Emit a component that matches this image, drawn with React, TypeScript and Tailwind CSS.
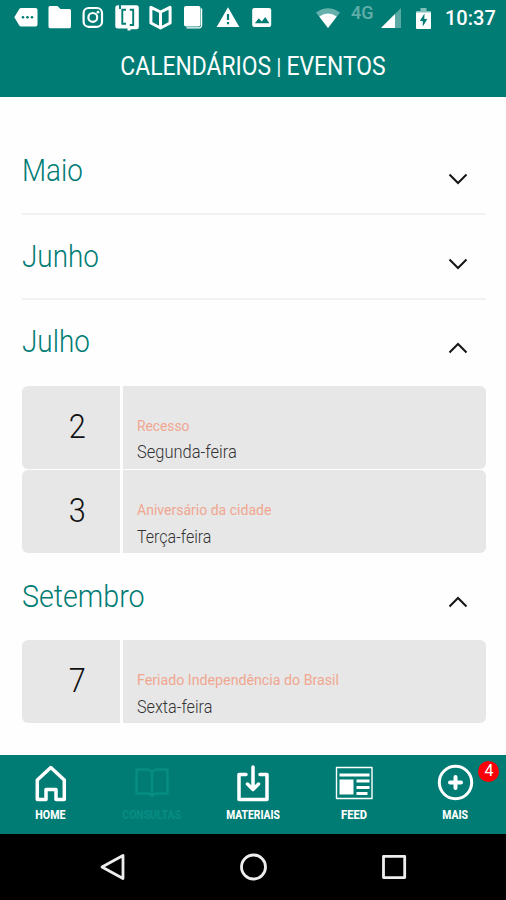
import { useState } from 'react';
import type { ReactNode } from 'react';
import clsx from 'clsx';

type EventItem = { day: number; title: string; weekday: string; titleScale: string; weekdayScale: string };
type Month = { name: string; scale: string; events: EventItem[]; open: boolean };

const MONTHS: Month[] = [
  { name: 'Maio', scale: 'scale-x-[0.87]', open: false, events: [] },
  { name: 'Junho', scale: 'scale-x-[0.87]', open: false, events: [] },
  {
    name: 'Julho',
    scale: 'scale-x-[0.87]',
    open: true,
    events: [
      { day: 2, title: 'Recesso', weekday: 'Segunda-feira', titleScale: 'scale-x-[0.92]', weekdayScale: 'scale-x-[0.915]' },
      { day: 3, title: 'Aniversário da cidade', weekday: 'Terça-feira', titleScale: 'scale-x-[0.935]', weekdayScale: 'scale-x-[0.89]' },
    ],
  },
  {
    name: 'Setembro',
    scale: 'scale-x-[0.896]',
    open: true,
    events: [
      { day: 7, title: 'Feriado Independência do Brasil', weekday: 'Sexta-feira', titleScale: 'scale-x-[0.947]', weekdayScale: 'scale-x-[0.9]' },
    ],
  },
];

function StatusIcon({ children }: { children: ReactNode }) {
  return (
    <svg viewBox="0 0 24 26" className="h-[26px] w-6 shrink-0" fill="#fff">
      {children}
    </svg>
  );
}

function StatusBar() {
  return (
    <div className="flex h-9 items-center pl-[14px] pr-[11px]">
      <div className="flex gap-[9.7px]">
        <StatusIcon>
          <path d="M7 3h14.500q2 0 2 2v14.500q0 2-2 2H7q-1 0-1.700-1L.3 12.300 5.300 4q.7-1 1.700-1z" />
          <g fill="#007c75">
            <circle cx="9" cy="12.300" r="1.300" />
            <circle cx="13.500" cy="12.300" r="1.300" />
            <circle cx="18" cy="12.300" r="1.300" />
          </g>
        </StatusIcon>
        <StatusIcon>
          <path d="M2 1h7.500l3 3H21.500q1.500 0 1.500 1.500v16q0 1.800-1.500 1.800H2Q.5 23.300.5 21.500v-19Q.5 1 2 1z" />
        </StatusIcon>
        <StatusIcon>
          <g fill="none" stroke="#fff" strokeWidth="2.200">
            <rect x="2.600" y="3" width="18.400" height="18.800" rx="5" />
            <circle cx="11.800" cy="12.400" r="4.400" />
          </g>
          <circle cx="17" cy="7.200" r="1.400" />
        </StatusIcon>
        <StatusIcon>
          <path d="M3 .3h18.500q2.300 0 2.300 2.300v19.400q0 2.300-2.300 2.300H15.500v1.200h-3V23.500H3Q.3 23.500.3 21V2.800Q.3.300 3 .3z" />
          <path d="M5 0v4M11 4.800H7.300v14H11M14.800 4.800h3.400v15.200h-3.400" fill="none" stroke="#007c75" strokeWidth="1.900" />
        </StatusIcon>
        <StatusIcon>
          <path d="M1.900 2.300 11.500 7l9.600-4.700V18l-9.600 5L1.900 18z" fill="none" stroke="#fff" strokeWidth="3" strokeLinejoin="round" />
          <path d="M11.500 6v16" stroke="#fff" strokeWidth="3" />
        </StatusIcon>
        <StatusIcon>
          <rect x="2" y="1" width="16.500" height="20.500" rx="2" />
          <path d="M19.600 3.500v16.800q0 2.500-2.500 2.500H4.500" fill="none" stroke="#fff" strokeWidth="1.200" />
        </StatusIcon>
        <StatusIcon>
          <path d="M12 2.200 23.300 22H.7z" />
          <path d="M12 9v6M12 17v2.300" stroke="#007c75" strokeWidth="2.200" />
        </StatusIcon>
        <StatusIcon>
          <rect x="2.200" y="3" width="19" height="19" rx="2.200" />
          <path d="M4.800 18.300l4-5 3 3.200 3.500-4.500 4 6.300z" fill="#007c75" />
        </StatusIcon>
      </div>
      <div className="ml-auto flex items-center">
        <svg viewBox="0 0 24 20" className="h-5 w-6">
          <path d="M0 4.600Q12-4 24 4.600L12 20z" fill="#fff" opacity=".4" />
          <path d="M3.300 8.500Q12 2.500 20.700 8.500L12 20z" fill="#fff" />
        </svg>
        <span className="relative -top-[5px] ml-[11px] w-[24px] text-[18px] leading-5 font-medium text-white/40">4G</span>
        <svg viewBox="0 0 20 20" className="ml-[6px] h-5 w-5">
          <path d="M20 0v20H0z" fill="#fff" opacity=".35" />
          <path d="M14 6v14H0z" fill="#fff" />
        </svg>
        <svg viewBox="0 0 15 21" className="ml-[15px] h-[21px] w-[15px]">
          <path d="M4.500 0h6v3h3.500q1 0 1 1v1H0V4q0-1 1-1h3.500z" fill="#fff" opacity=".5" />
          <path d="M0 4.500h15V20q0 1-1 1H1q-1 0-1-1z" fill="#fff" />
          <path d="M8.500 5.500 3.800 13h3V18.500l4.500-7.500h-3z" fill="#007c75" />
        </svg>
        <span className="ml-[14px] w-[50px] text-[20px] leading-6 font-medium whitespace-nowrap text-white">10:37</span>
      </div>
    </div>
  );
}

function EventRow({ event }: { event: EventItem }) {
  return (
    <div className="flex h-[83px] gap-[3px] overflow-hidden rounded-md">
      <div className="flex w-[98px] justify-center bg-[#e7e7e7] pt-[25px] pl-[13px]">
        <span className="scale-x-[0.93] text-[33px] leading-8 font-light text-[#111]">{event.day}</span>
      </div>
      <div className="flex flex-1 flex-col items-start bg-[#e7e7e7] pt-[30px] pl-[14px] whitespace-nowrap">
        <span className={clsx('origin-left text-[15px] leading-5 text-[#f0a68f]', event.titleScale)}>{event.title}</span>
        <span className={clsx('mt-[2.500px] origin-left text-[18px] leading-7 font-light text-[#333]', event.weekdayScale)}>{event.weekday}</span>
      </div>
    </div>
  );
}

function MonthSection({ month }: { month: Month }) {
  const [open, setOpen] = useState(month.open);
  return (
    <section>
      <button
        type="button"
        onClick={() => setOpen(!open)}
        className={clsx('flex h-[85.5px] w-full items-start justify-between pt-[25.2px] pr-[18px]', !open && 'border-b-2 border-[#f1f1f1]')}
      >
        <span className={clsx('origin-left text-[32px] leading-8 font-light text-[#007c75]', month.scale)}>{month.name}</span>
        <svg viewBox="0 0 20 12" className={clsx('h-3 w-5', open ? 'mt-[16.5px] rotate-180' : 'mt-[18.5px]')}>
          <path d="M1.500 1.500 10 10l8.500-8.500" fill="none" stroke="#151515" strokeWidth="2" />
        </svg>
      </button>
      {open && (
        <div className="flex flex-col gap-[1.500px] pb-[1.500px]">
          {month.events.map((event) => (
            <EventRow key={event.day} event={event} />
          ))}
        </div>
      )}
    </section>
  );
}

function NavItem({ label, scale, muted, children }: { label: string; scale: string; muted?: boolean; children: ReactNode }) {
  return (
    <a className={clsx('relative flex flex-col items-center pt-[9px]', muted ? 'text-[#078c82]' : 'text-white')}>
      <svg viewBox="0 0 38 38" className="h-[38px] w-[38px]" fill="none" stroke="currentColor" strokeWidth="3.500" strokeLinejoin="round" strokeLinecap="round">
        {children}
      </svg>
      <span className={clsx('mt-[5px] text-[13px] leading-4 font-extrabold', scale)}>{label}</span>
    </a>
  );
}

export default function App() {
  return (
    <div className="flex h-[900px] w-[506px] flex-col overflow-hidden bg-[#fefefe] font-[Roboto,sans-serif]">
      <header className="h-[97px] bg-[#007c75]">
        <StatusBar />
        <h1 className="flex h-[60px] origin-center scale-x-[0.88] items-center justify-center gap-[6px] text-[26px] whitespace-nowrap text-white">
          <span>CALENDÁRIOS</span>
          <span className="text-[22px]">|</span>
          <span>EVENTOS</span>
        </h1>
      </header>

      <main className="flex-1 pt-8 pr-[20px] pl-[22px]">
        {MONTHS.map((month) => (
          <MonthSection key={month.name} month={month} />
        ))}
      </main>

      <nav className="grid h-[79.5px] grid-cols-5 bg-[#007c75]">
        <NavItem label="HOME" scale="scale-x-[0.82]">
          <path d="M18.800 3.500 32.300 16v19.500h-8.300V25.500h-10v10H5.300V16z" />
        </NavItem>
        <NavItem label="CONSULTAS" scale="scale-x-[0.8]" muted>
          <path d="M3.500 5.500H14q3.500 0 5 3 1.500-3 5-3h10.500v24H24q-3.500 0-5 2.500-1.500-2.500-5-2.500H3.500zM19 8.500v23" strokeWidth="2.500" />
        </NavItem>
        <NavItem label="MATERIAIS" scale="scale-x-[0.79]">
          <path d="M12 10.500H5v25h28v-25h-7M19 3v22M13.500 20 19 25.500 24.500 20" />
        </NavItem>
        <NavItem label="FEED" scale="scale-x-[0.86]">
          <rect x="1.500" y="3.500" width="35.500" height="31" strokeWidth="1.400" />
          <path d="M4.500 11h30M21.500 17h13M21.500 23.500h13M21.500 29.500h11" strokeWidth="3" strokeLinecap="butt" />
          <rect x="4.500" y="15.500" width="14" height="15" fill="currentColor" stroke="none" />
        </NavItem>
        <div className="relative">
          <NavItem label="MAIS" scale="scale-x-[0.8]">
            <circle cx="19.500" cy="18.500" r="16.200" strokeWidth="3" />
            <path d="M19.500 13v11M14 18.500h11" strokeWidth="4" />
          </NavItem>
          <span className="absolute top-[6px] right-[6.5px] flex h-[21px] w-[21px] items-center justify-center rounded-full bg-[#fb0007] text-[16px] leading-none text-white">
            4
          </span>
        </div>
      </nav>

      <footer className="flex h-[66px] items-center justify-center bg-black">
        <svg viewBox="0 0 28 28" className="h-7 w-7" fill="none" stroke="#eee" strokeWidth="2.800" strokeLinejoin="round">
          <path d="M24 2.500v23L3 14z" />
        </svg>
        <svg viewBox="0 0 28 28" className="mx-[112px] h-7 w-7" fill="none" stroke="#eee" strokeWidth="2.800">
          <circle cx="14.500" cy="14" r="12" />
        </svg>
        <svg viewBox="0 0 28 28" className="h-7 w-7" fill="none" stroke="#eee" strokeWidth="2.800" strokeLinejoin="round">
          <rect x="4.500" y="3.400" width="21.200" height="21.200" />
        </svg>
      </footer>
    </div>
  );
}
